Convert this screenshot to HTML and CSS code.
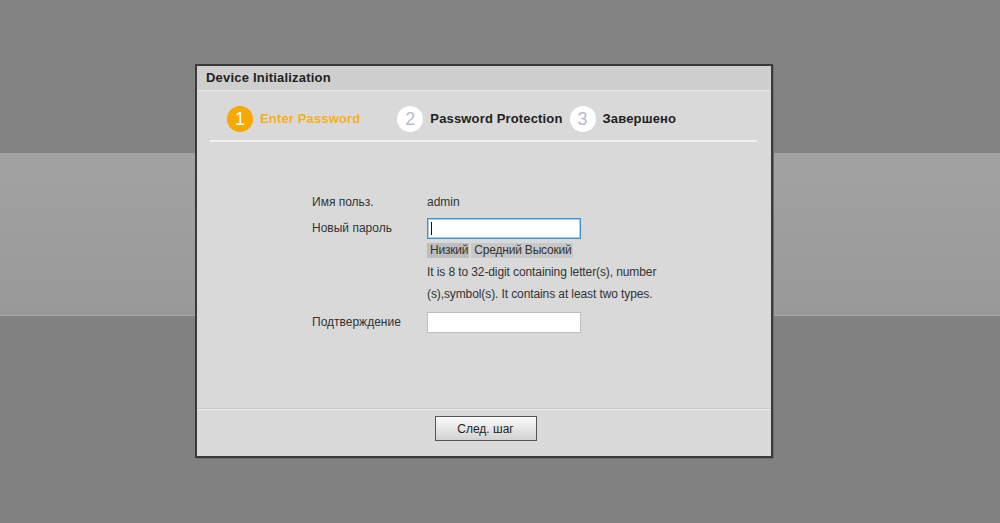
FILE: index.html
```html
<html>
  <head>
    <meta charset="UTF-8">
    <link rel="stylesheet" href="styles.css">
  </head>
  <body>
    <div class="backdrop">
      <div class="band band-top"></div>
      <div class="band band-mid"></div>
      <div class="band band-bottom"></div>
    </div>
    <div class="dialog">
      <div class="dialog-title">Device Initialization</div>
      <div class="dialog-body">
        <div class="steps">
          <div class="step active"><span class="num">1</span>Enter Password</div>
          <div class="step"><span class="num">2</span>Password Protection</div>
          <div class="step"><span class="num">3</span>Завершено</div>
        </div>
        <form class="init-form">
          <div class="row">
            <label>Имя польз.</label>
            <div class="value">admin</div>
          </div>
          <div class="row">
            <label for="pwd">Новый пароль</label>
            <div class="value">
              <div class="field-wrap">
                <input type="password" id="pwd" class="field focused">
                <span class="caret"></span>
              </div>
              <div class="strength"><span class="low">Низкий</span><span>Средний Высокий</span></div>
              <div class="hint">It is 8 to 32-digit containing letter(s), number (s),symbol(s). It contains at least two types.</div>
            </div>
          </div>
          <div class="row">
            <label for="pwd2">Подтверждение</label>
            <div class="value"><input type="password" id="pwd2" class="field"></div>
          </div>
        </form>
      </div>
      <div class="dialog-footer">
        <button type="button" class="btn">След. шаг</button>
      </div>
    </div>
  </body>
</html>
```

FILE: styles.css
```css
html, body {
  margin: 0;
  height: 100%;
}
body {
  font-family: "Liberation Sans", Arial, sans-serif;
  font-size: 12px;
  color: #333;
  background: #828282;
  overflow: hidden;
}
.backdrop {
  height: 523px;
  display: flex;
  flex-direction: column;
}
.band-top {
  height: 153px;
  background: #838383;
}
.band-mid {
  height: 162px;
  background: linear-gradient(#a2a2a2, #999999);
  border-bottom: 1px solid #a6a6a6;
}
.band-bottom {
  flex: 1;
  background: #818181;
}
.dialog {
  position: absolute;
  left: 195px;
  top: 64px;
  width: 574px;
  height: 390px;
  border: 2px solid #3a3a3a;
  background: #d9d9d9;
  box-shadow: 1px 1px 0 #6e6e6e;
  display: flex;
  flex-direction: column;
}
.dialog-title {
  height: 24px;
  line-height: 23px;
  padding-left: 9px;
  font-size: 13px;
  font-weight: bold;
  letter-spacing: 0.2px;
  color: #222;
  background: #cfcfcf;
  border-bottom: 1px solid #e6e6e6;
}
.dialog-body {
  flex: 1;
  padding: 0 14px 0 13px;
}
.steps {
  display: flex;
  align-items: center;
  height: 43px;
  padding: 6px 0 0 17px;
  border-bottom: 2px solid #f2f2f2;
  font-size: 13px;
  font-weight: bold;
  letter-spacing: 0.15px;
  color: #222;
}
.step {
  display: flex;
  align-items: center;
  margin-right: 7px;
}
.step .num {
  width: 26px;
  height: 26px;
  border-radius: 50%;
  background: #fff;
  color: #b8bac8;
  font-size: 18px;
  font-weight: normal;
  letter-spacing: 0;
  line-height: 26px;
  text-align: center;
  margin-right: 7px;
}
.step.active {
  color: #f5b01e;
  margin-right: 37px;
}
.step.active .num {
  background: #f5a800;
  color: #fff;
}
.init-form {
  padding: 50px 0 0 102px;
}
.row {
  display: flex;
  margin-bottom: 7px;
}
.row label {
  width: 115px;
  line-height: 20px;
  color: #333;
}
.value {
  line-height: 20px;
  color: #333;
}
.row:first-child {
  margin-bottom: 6px;
}
.field-wrap {
  position: relative;
}
.field {
  display: block;
  box-sizing: border-box;
  width: 154px;
  height: 21px;
  margin: 0;
  border: 1px solid #bdbdbd;
  background: #fff;
  outline: none;
}
.field.focused {
  border-color: #3f8fd6;
  box-shadow: inset 0 0 0 1px #a9cff0;
}
.caret {
  position: absolute;
  left: 4px;
  top: 4px;
  width: 1px;
  height: 13px;
  background: #111;
}
.strength {
  display: flex;
  margin-top: 4px;
  height: 15px;
  line-height: 15px;
}
.strength span {
  background: #c8c8c8;
  padding: 0 1px 0 3px;
  margin-right: 2px;
  color: #333;
  letter-spacing: -0.2px;
}
.strength .low {
  background: #bdbdbd;
}
.hint {
  width: 236px;
  line-height: 22px;
  margin-top: 3px;
  letter-spacing: -0.1px;
}
.dialog-footer {
  height: 48px;
  border-top: 1px solid #c8c8c8;
  box-shadow: inset 0 1px 0 #ececec;
  display: flex;
  justify-content: center;
  align-items: flex-start;
  padding-top: 7px;
  box-sizing: border-box;
  background: #dadada;
}
.btn {
  width: 102px;
  height: 25px;
  margin-left: 3px;
  font-family: "Liberation Sans", Arial, sans-serif;
  font-size: 12px;
  color: #222;
  border: 1px solid #555;
  background: linear-gradient(#fbfbfb, #d2d2d2);
  cursor: pointer;
}
```
